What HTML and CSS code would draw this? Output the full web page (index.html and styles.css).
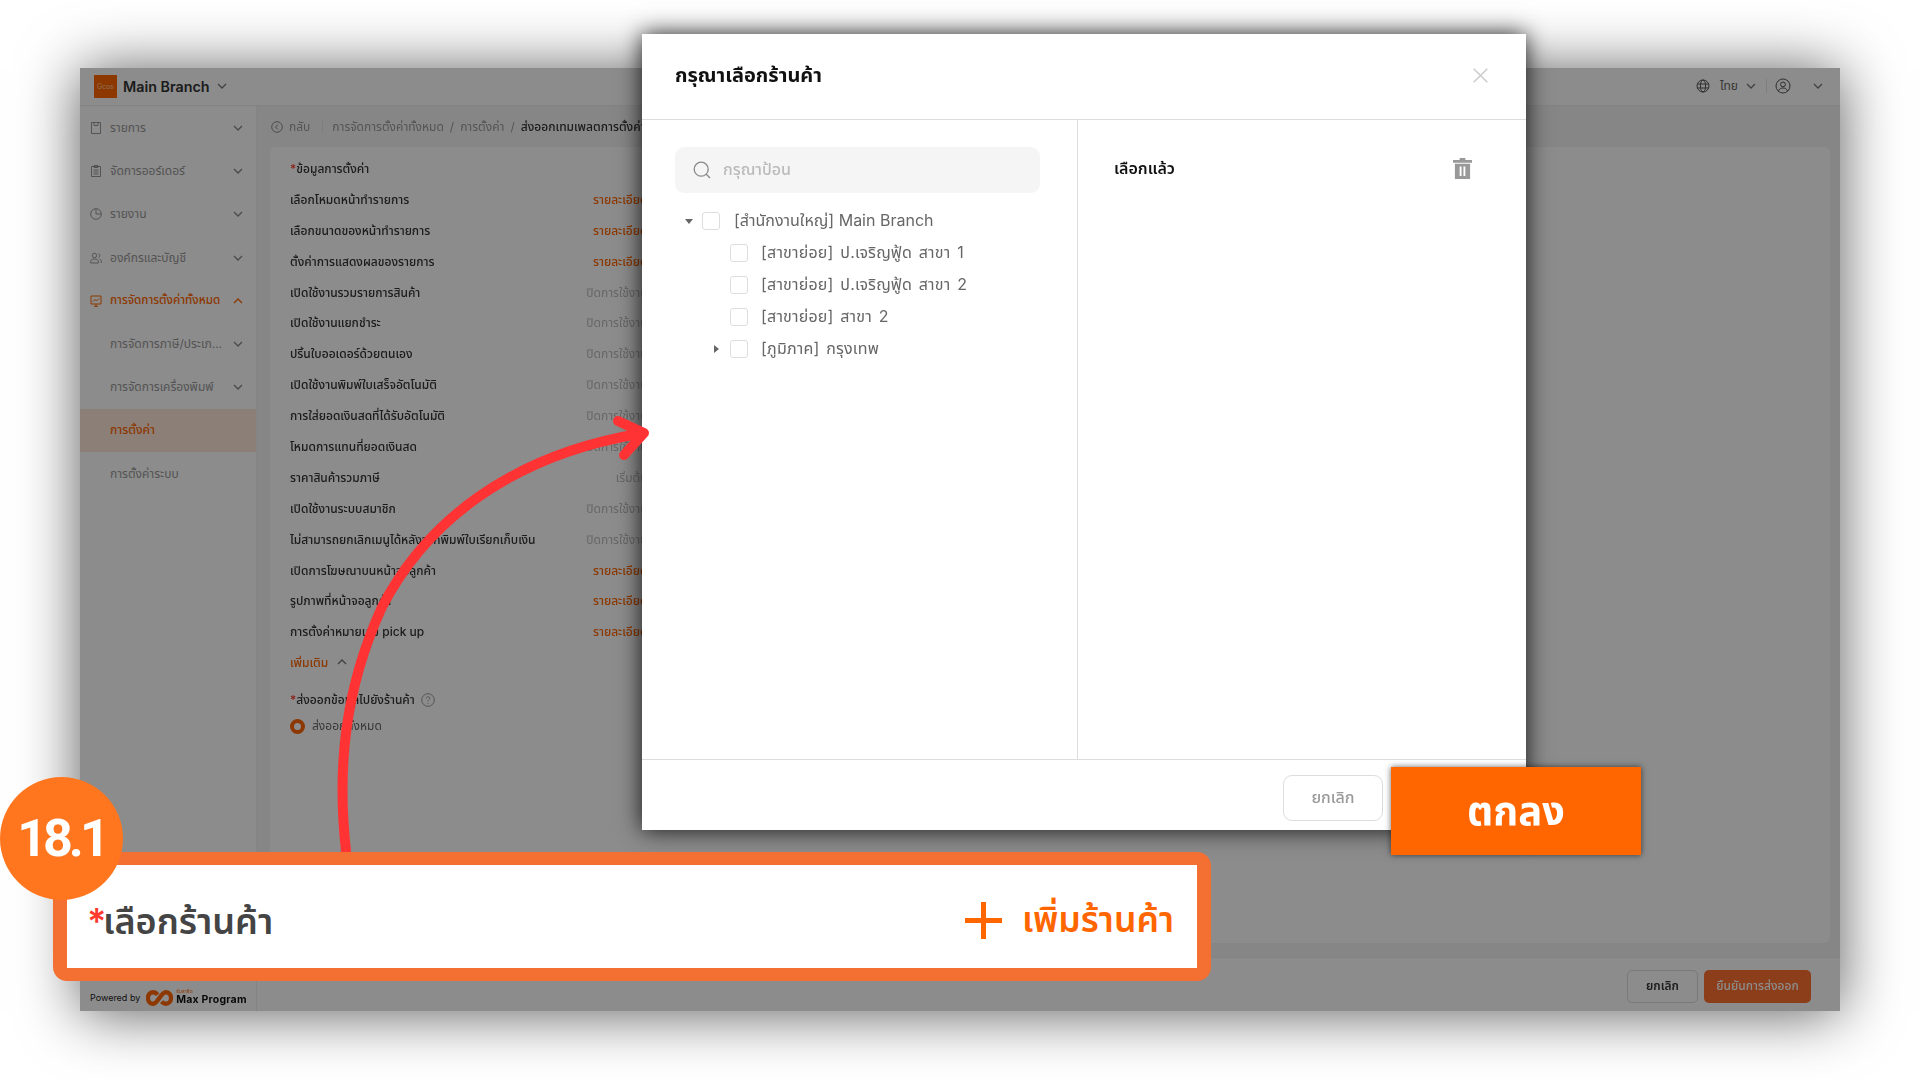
FILE: index.html
```html
<!DOCTYPE html>
<html lang="th">
<head>
	<meta charset="UTF-8">
	<title>เลือกร้านค้า</title>
	<link rel="stylesheet" href="styles.css">
</head>
<body>
	<div class="stage">

		<!-- background app, dimmed -->
		<div class="app">
			<div class="top">
				<div class="top_left">
					<div class="logo">Gcos</div>
					<span class="branch">Main Branch</span>
					<svg class="chev" viewBox="0 0 10 6"><path d="M1 1l4 4 4-4"/></svg>
				</div>
				<div class="top_right">
					<svg class="ico_globe" viewBox="0 0 14 14"><circle cx="7" cy="7" r="6"/><ellipse cx="7" cy="7" rx="2.6" ry="6"/><path d="M1 5h12M1 9h12"/></svg>
					<span class="lang">ไทย</span>
					<svg class="chev" viewBox="0 0 10 6"><path d="M1 1l4 4 4-4"/></svg>
					<i class="sep"></i>
					<svg class="ico_user" viewBox="0 0 16 16"><circle cx="8" cy="8" r="7"/><circle cx="8" cy="6.4" r="2.4"/><path d="M3.4 13c1-2.2 2.6-3 4.6-3s3.600.8 4.600 3"/></svg>
					<svg class="chev chev_last" viewBox="0 0 10 6"><path d="M1 1l4 4 4-4"/></svg>
				</div>
			</div>
			<div class="body">
				<div class="side">
					<div class="menu">
						<div class="m_item">
							<svg class="m_ico" viewBox="0 0 12 12"><path d="M1.500.5h9v11h-9zM4 .5v3h4v-3"/></svg>
							<span>รายการ</span>
							<svg class="chev" viewBox="0 0 10 6"><path d="M1 1l4 4 4-4"/></svg>
						</div>
						<div class="m_item">
							<svg class="m_ico" viewBox="0 0 12 12"><path d="M1.500 1.500h9v10h-9zM4 .5h4v2H4zM3.500 5h5M3.500 7h5M3.500 9h5"/></svg>
							<span>จัดการออร์เดอร์</span>
							<svg class="chev" viewBox="0 0 10 6"><path d="M1 1l4 4 4-4"/></svg>
						</div>
						<div class="m_item">
							<svg class="m_ico" viewBox="0 0 12 12"><circle cx="6" cy="6" r="5.300"/><path d="M6 1v5h5"/></svg>
							<span>รายงาน</span>
							<svg class="chev" viewBox="0 0 10 6"><path d="M1 1l4 4 4-4"/></svg>
						</div>
						<div class="m_item">
							<svg class="m_ico" viewBox="0 0 12 12"><circle cx="4.500" cy="3.500" r="2.200"/><path d="M.7 11V9.500C.7 7.900 2 7 4.500 7s3.800.9 3.800 2.500V11zM8.500 1.500a2.200 2.200 0 0 1 0 4M9.500 7.200c1.200.4 1.800 1.200 1.800 2.300V11"/></svg>
							<span>องค์กรและบัญชี</span>
							<svg class="chev" viewBox="0 0 10 6"><path d="M1 1l4 4 4-4"/></svg>
						</div>
						<div class="m_item on">
							<svg class="m_ico" viewBox="0 0 12 12"><path d="M1 1h10v8H1zM4 11.300h4M6 9v2M3 6.500l2-2 1.500 1.500L9 3.500"/></svg>
							<span>การจัดการตั้งค่าทั้งหมด</span>
							<svg class="chev up" viewBox="0 0 10 6"><path d="M1 5l4-4 4 4"/></svg>
						</div>
						<div class="m_item">
							<span class="no_ico">การจัดการภาษี/ประเภ...</span>
							<svg class="chev" viewBox="0 0 10 6"><path d="M1 1l4 4 4-4"/></svg>
						</div>
						<div class="m_item">
							<span class="no_ico">การจัดการเครื่องพิมพ์</span>
							<svg class="chev" viewBox="0 0 10 6"><path d="M1 1l4 4 4-4"/></svg>
						</div>
						<div class="m_item cur"><span class="no_ico">การตั้งค่า</span></div>
						<div class="m_item"><span class="no_ico">การตั้งค่าระบบ</span></div>
					</div>
					<div class="powered">
						<span class="pw_txt">Powered by</span>
						<svg class="pw_logo" viewBox="0 0 28 16"><path d="M12 4.500C10.800 3 9.500 2 7.500 2 4.500 2 2 4.500 2 8s2.500 6 5.500 6c4.500 0 8-12 13-12 3.200 0 5.500 2.700 5.500 6s-2.300 6-5.500 6c-1.800 0-3-.8-4.300-2.300"/></svg>
						<div class="pw_name"><small>รับสาธิต</small><b>Max Program</b></div>
					</div>
				</div>
				<div class="main">
					<div class="crumb">
						<svg class="ico_back" viewBox="0 0 12 12"><circle cx="6" cy="6" r="5.300"/><path d="M7 3.500L4.500 6 7 8.500"/></svg>
						<span class="back">กลับ</span>
						<i class="crumb_sep"></i>
						<span>การจัดการตั้งค่าทั้งหมด</span>
						<span>/</span>
						<span>การตั้งค่า</span>
						<span>/</span>
						<span class="crumb_now">ส่งออกเทมเพลตการตั้งค่า</span>
					</div>
					<div class="card">
						<div class="rows">
							<div class="row"><b><em>*</em>ข้อมูลการตั้งค่า</b></div>
							<div class="row"><b>เลือกโหมดหน้าทำรายการ</b><a>รายละเอียด</a></div>
							<div class="row"><b>เลือกขนาดของหน้าทำรายการ</b><a>รายละเอียด</a></div>
							<div class="row"><b>ตั้งค่าการแสดงผลของรายการ</b><a>รายละเอียด</a></div>
							<div class="row"><b>เปิดใช้งานรวมรายการสินค้า</b><span>ปิดการใช้งาน</span></div>
							<div class="row"><b>เปิดใช้งานแยกชำระ</b><span>ปิดการใช้งาน</span></div>
							<div class="row"><b>ปริ้นใบออเดอร์ด้วยตนเอง</b><span>ปิดการใช้งาน</span></div>
							<div class="row"><b>เปิดใช้งานพิมพ์ใบเสร็จอัตโนมัติ</b><span>ปิดการใช้งาน</span></div>
							<div class="row"><b>การใส่ยอดเงินสดที่ได้รับอัตโนมัติ</b><span>ปิดการใช้งาน</span></div>
							<div class="row"><b>โหมดการแทนที่ยอดเงินสด</b><span>ปิดการใช้งาน</span></div>
							<div class="row"><b>ราคาสินค้ารวมภาษี</b><span>เริ่มต้น</span></div>
							<div class="row"><b>เปิดใช้งานระบบสมาชิก</b><span>ปิดการใช้งาน</span></div>
							<div class="row"><b>ไม่สามารถยกเลิกเมนูได้หลังจากพิมพ์ใบเรียกเก็บเงิน</b><span>ปิดการใช้งาน</span></div>
							<div class="row"><b>เปิดการโฆษณาบนหน้าจอลูกค้า</b><a>รายละเอียด</a></div>
							<div class="row"><b>รูปภาพที่หน้าจอลูกค้า</b><a>รายละเอียด</a></div>
							<div class="row"><b>การตั้งค่าหมายเลข pick up</b><a>รายละเอียด</a></div>
							<div class="row"><a class="more">เพิ่มเติม <svg class="chev up" viewBox="0 0 10 6"><path d="M1 5l4-4 4 4"/></svg></a></div>
						</div>
						<div class="export">
							<b><em>*</em>ส่งออกข้อมูลไปยังร้านค้า</b>
							<svg class="ico_help" viewBox="0 0 14 14"><circle cx="7" cy="7" r="6.300"/><path d="M5.200 5.400C5.300 4.300 6 3.700 7 3.700s1.800.7 1.800 1.600c0 1.400-1.800 1.400-1.800 3"/><circle class="dot" cx="7" cy="10.300" r=".6"/></svg>
						</div>
						<div class="radio_row"><i class="radio"></i><span>ส่งออกทั้งหมด</span></div>
					</div>
					<div class="foot">
						<button class="f_cancel">ยกเลิก</button>
						<button class="f_ok">ยืนยันการส่งออก</button>
					</div>
				</div>
			</div>
			<div class="dim"></div>
		</div>

		<!-- store picker -->
		<div class="modal">
			<div class="m_head">
				<span>กรุณาเลือกร้านค้า</span>
				<svg class="ico_close" viewBox="0 0 15 15"><path d="M.7.7l13.600 13.600M14.300.7L.7 14.300"/></svg>
			</div>
			<div class="m_body">
				<div class="m_left">
					<div class="search">
						<svg class="ico_search" viewBox="0 0 18 18"><circle cx="8.200" cy="8.200" r="7"/><path d="M13.300 13.300l3.700 3.700"/></svg>
						<span>กรุณาป้อน</span>
					</div>
					<div class="tree">
						<div class="node"><i class="caret down"></i><i class="check"></i><span>[สำนักงานใหญ่] Main Branch</span></div>
						<div class="node sub"><i class="caret none"></i><i class="check"></i><span>[สาขาย่อย] ป.เจริญฟู้ด สาขา 1</span></div>
						<div class="node sub"><i class="caret none"></i><i class="check"></i><span>[สาขาย่อย] ป.เจริญฟู้ด สาขา 2</span></div>
						<div class="node sub"><i class="caret none"></i><i class="check"></i><span>[สาขาย่อย] สาขา 2</span></div>
						<div class="node sub"><i class="caret right"></i><i class="check"></i><span>[ภูมิภาค] กรุงเทพ</span></div>
					</div>
				</div>
				<div class="m_right">
					<b>เลือกแล้ว</b>
					<svg class="ico_trash" viewBox="0 0 20 22"><path d="M7 0h6v2h7v3H0V2h7z"/><path fill-rule="evenodd" d="M2 6h16v16H2zM7 9v10h2V9zM11 9v10h2V9z"/></svg>
				</div>
			</div>
			<div class="m_foot"><button>ยกเลิก</button></div>
		</div>

		<!-- annotations -->
		<div class="ok_big">ตกลง</div>

		<svg class="arrow" viewBox="0 0 1920 1080">
			<path d="M346 851C337 770 344 690 382 607C426 522 510 456 638 434"/>
			<path d="M618 421L644 433L624 455"/>
		</svg>

		<div class="callout">
			<div class="c_label"><em>*</em>เลือกร้านค้า</div>
			<div class="c_add">
				<svg class="ico_plus" viewBox="0 0 37 37"><path d="M18.500 0v37M0 18.500h37"/></svg>
				<span>เพิ่มร้านค้า</span>
			</div>
		</div>
		<div class="badge">18.1</div>
	</div>
</body>
</html>
```

FILE: styles.css
```css
* {
	box-sizing: border-box;
}
body {
	margin: 0;
	background: #fff;
	font-family: Inter, "Noto Sans Thai", "Noto Sans", "DejaVu Sans", sans-serif;
	font-size: 12px;
	color: #333;
}
i, em {
	font-style: normal;
}
button {
	font: inherit;
	background: none;
}
.stage {
	position: relative;
	width: 1920px;
	height: 1080px;
	overflow: hidden;
}
.chev {
	width: 10px;
	height: 6px;
	fill: none;
	stroke: #777;
	stroke-width: 1.3;
}

/* app behind the modal */
.app {
	position: absolute;
	left: 80px;
	top: 68px;
	width: 1760px;
	height: 943px;
	display: flex;
	flex-direction: column;
	background: #f5f5f5;
	box-shadow: 0 2px 56px rgba(0, 0, 0, .65);
	filter: blur(.45px);
}
.dim {
	position: absolute;
	inset: 0;
	background: rgba(0, 0, 0, .45);
}
.top {
	height: 38px;
	flex: none;
	display: flex;
	justify-content: space-between;
	align-items: center;
	background: #fff;
	border-bottom: 1px solid #eee;
	padding: 0 17px 1px 14px;
}
.top_left, .top_right {
	display: flex;
	align-items: center;
}
.logo {
	width: 23px;
	height: 23px;
	background: #ff6600;
	color: #ffc9a0;
	font-size: 7px;
	display: flex;
	align-items: center;
	justify-content: center;
}
.branch {
	font-size: 14.3px;
	font-weight: 600;
	color: #333;
	margin: 0 7px 0 6px;
}
.ico_globe {
	width: 14px;
	height: 14px;
	fill: none;
	stroke: #555;
	margin-right: 10px;
}
.lang {
	color: #666;
	margin-right: 8px;
}
.sep {
	width: 1px;
	height: 14px;
	background: #e5e5e5;
	margin: 0 8px 0 10px;
}
.ico_user {
	width: 16px;
	height: 16px;
	fill: none;
	stroke: #555;
	margin-right: 22px;
}
.body {
	flex: 1;
	display: flex;
	min-height: 0;
}
.side {
	width: 177px;
	flex: none;
	background: #fff;
	border-right: 1px solid #f0f0f0;
	display: flex;
	flex-direction: column;
	justify-content: space-between;
}
.menu {
	padding-top: .5px;
}
.m_item {
	height: 43.2px;
	display: flex;
	align-items: center;
	padding: 0 13px 0 10px;
	color: #999;
}
.m_item span {
	flex: 1;
	margin-left: 8px;
}
.m_item span.no_ico {
	margin-left: 20px;
	white-space: nowrap;
	overflow: hidden;
}
.m_ico {
	width: 12px;
	height: 12px;
	fill: none;
	stroke: #999;
	flex: none;
}
.m_item .chev {
	flex: none;
	stroke: #888;
}
.on, .cur {
	color: #ff6600;
	font-weight: 500;
}
.on {
	font-size: 11.7px;
}
.on .m_ico, .m_item .chev.up {
	stroke: #ff6600;
}
.cur {
	background: #ffe8db;
}
.powered {
	height: 54px;
	display: flex;
	align-items: flex-end;
	padding: 0 0 5px 10px;
	border-top: 1px solid #f5f5f5;
}
.pw_txt {
	font-size: 9px;
	color: #222;
	margin: 0 6px 3px 0;
}
.pw_logo {
	width: 27px;
	height: 16px;
	fill: none;
	stroke: #ff6600;
	stroke-width: 4.500;
}
.pw_name {
	display: flex;
	flex-direction: column;
	line-height: 9px;
	margin-left: 3px;
}
.pw_name small {
	font-size: 5px;
	line-height: 6px;
	color: #ff6600;
}
.pw_name b {
	font-size: 10.500px;
	letter-spacing: .2px;
	line-height: 12px;
	color: #111;
	white-space: nowrap;
}
.main {
	flex: 1;
	min-width: 0;
	display: flex;
	flex-direction: column;
}
.crumb {
	height: 41px;
	flex: none;
	display: flex;
	align-items: center;
	gap: 6px;
	padding-left: 14px;
	color: #999;
}
.ico_back {
	width: 12px;
	height: 12px;
	fill: none;
	stroke: #888;
}
.crumb_sep {
	width: 1px;
	height: 12px;
	background: #e5e5e5;
	margin: 0 3px 0 6px;
}
.crumb_now {
	color: #333;
	font-weight: 500;
}
.card {
	flex: 1;
	margin: 0 10px 0 13px;
	background: #fff;
	border-radius: 6px;
	padding: 6.500px 0 0 20px;
}
.rows {
	width: 357.500px;
}
.row {
	height: 30.9px;
	display: flex;
	justify-content: space-between;
	align-items: center;
	color: #bbb;
	white-space: nowrap;
}
.row b, .export b {
	color: #333;
	font-weight: 500;
}
.row a, .more {
	color: #ff6600;
	font-weight: 500;
}
.more .chev {
	margin-left: 6px;
	vertical-align: 2px;
}
.export b em, .row b em {
	color: #ff3b30;
}
.export {
	display: flex;
	align-items: center;
	gap: 6px;
	margin-top: 9.700px;
	height: 24px;
}
.ico_help {
	width: 14px;
	height: 14px;
	fill: none;
	stroke: #999;
}
.ico_help .dot {
	fill: #999;
	stroke: none;
}
.radio_row {
	display: flex;
	align-items: center;
	gap: 7px;
	height: 28px;
	color: #666;
}
.radio {
	width: 15px;
	height: 15px;
	border-radius: 50%;
	border: 4.500px solid #ff6600;
	background: #fff;
}
.foot {
	height: 54px;
	flex: none;
	display: flex;
	justify-content: flex-end;
	align-items: center;
	gap: 6px;
	padding: 3px 29px 0 0;
	margin-top: 14px;
	background: #fff;
	border-top: 1px solid #eee;
}
.f_cancel {
	width: 71px;
	height: 33px;
	border: 1px solid #ddd;
	border-radius: 5px;
	color: #333;
	font-weight: 600;
}
.f_ok {
	width: 107px;
	height: 33px;
	border: 0;
	border-radius: 5px;
	background: #ff6f2e;
	color: #fff;
	font-weight: 500;
}

/* modal */
.modal {
	position: absolute;
	left: 642px;
	top: 34px;
	width: 884px;
	height: 796px;
	background: #fff;
	box-shadow: 0 0 22px rgba(0, 0, 0, .85);
	display: flex;
	flex-direction: column;
}
.m_head {
	height: 86px;
	flex: none;
	display: flex;
	justify-content: space-between;
	align-items: center;
	padding: 0 38px 2px 33px;
	border-bottom: 1px solid #ddd;
	font-size: 20px;
	font-weight: 700;
	color: #111;
}
.ico_close {
	width: 15px;
	height: 15px;
	fill: none;
	stroke: #ccc;
	stroke-width: 1.500;
}
.m_body {
	flex: 1;
	display: flex;
	min-height: 0;
}
.m_left {
	width: 436px;
	flex: none;
	border-right: 1px solid #ddd;
	padding: 27px 33px 0;
}
.search {
	width: 365px;
	height: 46px;
	background: #f5f5f5;
	border-radius: 9px;
	display: flex;
	align-items: center;
	padding-left: 18px;
	gap: 12px;
	color: #bbb;
	font-size: 16px;
	font-weight: 500;
}
.ico_search {
	width: 18px;
	height: 18px;
	fill: none;
	stroke: #888;
	stroke-width: 1.300;
}
.tree {
	margin-top: 12px;
	color: #666;
	font-size: 16px;
}
.node {
	height: 32px;
	display: flex;
	align-items: center;
}
.sub {
	padding-left: 28px;
}
.sub span {
	margin-left: -1px;
	letter-spacing: .2px;
	word-spacing: 2px;
}
.caret {
	width: 27px;
	display: flex;
	justify-content: center;
}
.caret.down::before {
	content: "";
	border: 4px solid transparent;
	border-top: 5px solid #666;
	border-bottom: 0;
}
.caret.right::before {
	content: "";
	border: 4px solid transparent;
	border-left: 5px solid #666;
	border-right: 0;
}
.check {
	width: 18px;
	height: 18px;
	border: 1px solid #ddd;
	border-radius: 3px;
	margin-right: 14px;
}
.m_right {
	flex: 1;
	display: flex;
	justify-content: space-between;
	align-items: flex-start;
	padding: 36px 54px 0 36px;
	font-size: 16px;
	color: #111;
}
.m_right b {
	font-weight: 600;
	line-height: 24px;
}
.ico_trash {
	width: 19px;
	height: 21px;
	fill: #999;
	margin-top: 2px;
}
.m_foot {
	height: 71px;
	flex: none;
	border-top: 1px solid #ddd;
	padding: 15px 0 0 641px;
}
.m_foot button {
	width: 100px;
	height: 46px;
	border: 1px solid #ddd;
	border-radius: 9px;
	color: #999;
	font-size: 16px;
	font-weight: 500;
}

/* annotations on top */
.ok_big {
	position: absolute;
	left: 1391px;
	top: 767px;
	width: 250px;
	height: 88px;
	padding-top: 3px;
	background: #ff6600;
	color: #fff;
	font-size: 40px;
	font-weight: 700;
	display: flex;
	align-items: center;
	justify-content: center;
	box-shadow: 0 0 6px rgba(0, 0, 0, .6);
}
.arrow {
	position: absolute;
	left: 0;
	top: 0;
	width: 1920px;
	height: 1080px;
	fill: none;
	stroke: #ff3333;
	stroke-width: 10;
	stroke-linecap: round;
	stroke-linejoin: round;
}
.callout {
	position: absolute;
	left: 53px;
	top: 852px;
	width: 1158px;
	height: 129px;
	background: #fff;
	border: 14px solid #f47032;
	border-width: 13px 14px;
	border-radius: 14px 14px;
	display: flex;
	justify-content: space-between;
	align-items: center;
	padding: 7px 23px 0 20px;
}
.c_label {
	margin-top: 5px;
	font-size: 36px;
	font-weight: 600;
	color: #444;
}
.c_label em {
	color: #ff3b30;
	margin-right: -3.500px;
}
.c_add {
	margin-top: 1px;
	display: flex;
	align-items: center;
	gap: 20px;
	color: #ff6600;
	font-size: 35.500px;
	font-weight: 600;
}
.ico_plus {
	width: 37px;
	height: 37px;
	fill: none;
	stroke: #ff6600;
	stroke-width: 5;
}
.badge {
	position: absolute;
	left: 0;
	top: 777px;
	width: 123px;
	height: 123px;
	border-radius: 50%;
	background: #ff761f;
	color: #fff;
	font-family: Roboto, sans-serif;
	font-size: 52px;
	font-weight: 700;
	letter-spacing: -4px;
	display: flex;
	align-items: center;
	justify-content: center;
}
```
